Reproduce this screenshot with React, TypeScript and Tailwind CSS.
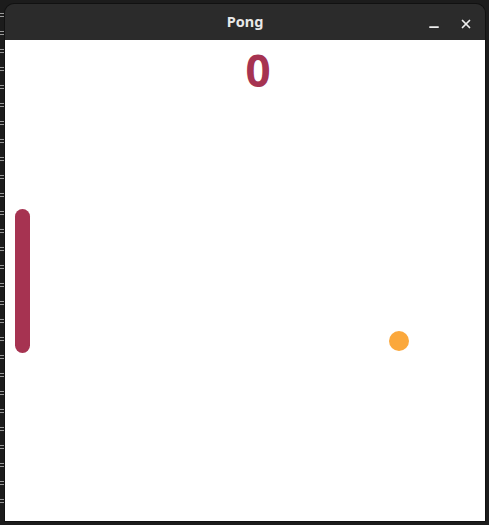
import { Minus, X } from "lucide-react";

const ticks = Array.from({ length: 28 });

export default function App() {
  return (
    <div className="flex h-[525px] w-[489px] overflow-hidden bg-[#1c1c1c] font-['Noto_Sans',sans-serif]">
      <div className="flex w-[5px] flex-col gap-[14px] pt-[13px]">
        {ticks.map((_, i) => (
          <div key={i} className="flex flex-col gap-[2px]">
            <div className="h-px w-[4px] bg-[#9a9a9a]" />
            <div className="h-px w-[4px] bg-[#9a9a9a]" />
          </div>
        ))}
      </div>

      <div className="mt-[4px] flex h-[517px] w-[480px] flex-col overflow-hidden rounded-t-[9px] shadow-[0_0_0_1px_#111]">
        <div className="relative flex h-[36px] items-center justify-center bg-[#2b2b2b]">
          <span className="text-[14.5px] font-bold text-[#e8e8e8]">Pong</span>
          <div className="absolute right-[12px] top-[10px] flex items-center gap-[18px]">
            <Minus className="mt-[6px] h-[14px] w-[14px] text-[#eeeeee]" strokeWidth={3} />
            <X className="h-[14px] w-[14px] text-[#eeeeee]" strokeWidth={3} />
          </div>
        </div>

        <div className="relative flex-1 bg-white">
          <div className="flex justify-center pl-[26px] pt-[8px]">
            <span className="text-[44px] font-bold leading-none text-[#a63351]">0</span>
          </div>
          <div className="absolute left-[10px] top-[169px] h-[144px] w-[15px] rounded-full bg-[#a63351]" />
          <div className="absolute left-[384px] top-[291px] h-[20px] w-[20px] rounded-full bg-[#fba83c]" />
        </div>
      </div>
    </div>
  );
}
